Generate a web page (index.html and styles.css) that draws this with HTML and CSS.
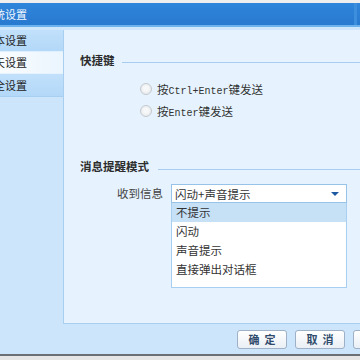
FILE: index.html
```html
<!DOCTYPE html>
<html lang="zh">
<head>
<meta charset="utf-8">
<title>系统设置</title>
<link rel="stylesheet" href="styles.css">
</head>
<body>
<div class="window">
  <div class="topstrip"></div>
  <div class="titlebar"><span class="title">系统设置</span><span class="edge"></span></div>
  <div class="titleline"></div>
  <div class="body">
    <nav class="nav">
      <div class="tab">基本设置</div>
      <div class="tab active">聊天设置</div>
      <div class="tab">安全设置</div>
    </nav>
    <main class="panel">
      <div class="section-head"><span class="label">快捷键</span><span class="rule"></span></div>
      <div class="radios">
        <div class="radio-row"><span class="radio"></span><span class="rtext">按<span class="mono">Ctrl+Enter</span>键发送</span></div>
        <div class="radio-row"><span class="radio"></span><span class="rtext">按<span class="mono">Enter</span>键发送</span></div>
      </div>
      <div class="section-head second"><span class="label">消息提醒模式</span><span class="rule"></span></div>
      <div class="form-row">
        <span class="flabel">收到信息</span>
        <div class="combo">
          <div class="select"><span>闪动+声音提示</span><span class="arrow"></span></div>
          <ul class="list">
            <li class="sel">不提示</li>
            <li>闪动</li>
            <li>声音提示</li>
            <li>直接弹出对话框</li>
          </ul>
        </div>
      </div>
    </main>
  </div>
  <div class="footer">
    <button class="btn">确定</button>
    <button class="btn">取消</button>
    <button class="btn">应用</button>
  </div>
  <div class="bottomline"></div>
</div>
</body>
</html>
```
FILE: styles.css
```css
html, body {
  margin: 0;
  padding: 0;
  width: 360px;
  height: 360px;
  overflow: hidden;
  background: #e6e6e6;
}
body {
  font-family: "Noto Sans CJK SC", "Noto Sans", sans-serif;
  color: #333;
}
.window {
  width: 420px;
  margin-left: -24px;
  display: flex;
  flex-direction: column;
}
.topstrip {
  height: 3px;
  background: #efefef;
}
.titlebar {
  height: 22px;
  background: linear-gradient(#2f86da, #2879d0);
  display: flex;
  align-items: center;
  padding-left: 7px;
  position: relative;
}
.title {
  color: #f2f8fe;
  font-size: 11px;
  line-height: 22px;
  letter-spacing: 0;
}
.edge {
  position: absolute;
  left: 378px;
  top: 0;
  width: 3px;
  height: 22px;
  background: #3d8fdd;
}
.titleline {
  height: 2px;
  background: #6cb3ee;
  border-bottom: 3px solid #cfe6fb;
}
.body {
  display: flex;
  height: 294px;
  background: #cde5fa;
}
.nav {
  width: 88px;
  flex: none;
  display: flex;
  flex-direction: column;
}
.tab {
  height: 21px;
  line-height: 21px;
  font-size: 11px;
  padding-left: 7px;
  color: #222;
  background: linear-gradient(#c1e0fb, #b3d8f8);
  border-bottom: 1px solid #def0fd;
  border-right: 1px solid #9fc8ec;
}
.tab.active {
  background: linear-gradient(90deg, #ffffff, #eaf5fe);
  border-right: 1px solid transparent;
  border-bottom: 1px solid #e6f3fe;
}
.tab:last-child {
  height: 22px;
  line-height: 22px;
  border-bottom: 1px solid #a9cff0;
}
.panel {
  flex: 1;
  background: #e6f3fe;
  border-left: 1px solid #a9cff0;
  border-bottom: 1px solid #a9cff0;
  margin-left: -1px;
  padding-left: 16px;
  display: flex;
  flex-direction: column;
}
.section-head {
  display: flex;
  align-items: center;
  height: 16px;
  margin-top: 22px;
}
.section-head.second {
  margin-top: 36px;
}
.label {
  font-size: 11.5px;
  font-weight: bold;
  color: #2d2d2d;
  line-height: 16px;
}
.rule {
  flex: 1;
  border-top: 1px solid #a6cdef;
  margin-left: 7px;
  margin-top: 4px;
}
.second .rule {
  margin-left: 9px;
  margin-top: 6px;
}
.radios {
  margin-top: 10px;
  padding-left: 60px;
  display: flex;
  flex-direction: column;
}
.radio-row {
  height: 22px;
  display: flex;
  align-items: center;
}
.radio {
  width: 10px;
  height: 10px;
  border-radius: 50%;
  border: 1px solid #c4c9ce;
  background: radial-gradient(circle at 50% 45%, #f6f7f8 30%, #dfe3e7 100%);
  margin-right: 5px;
}
.rtext {
  font-size: 11.5px;
  color: #333;
}
.mono {
  font-family: "Liberation Mono", monospace;
  font-size: 10px;
}
.form-row {
  display: flex;
  align-items: flex-start;
  margin-top: 10px;
}
.flabel {
  width: 83px;
  text-align: right;
  font-size: 11.5px;
  line-height: 19px;
  color: #444;
  margin-right: 8px;
}
.combo {
  width: 176px;
  display: flex;
  flex-direction: column;
}
.select {
  height: 17px;
  border: 1px solid #98c3e8;
  background: #fff;
  display: flex;
  align-items: center;
  justify-content: space-between;
  padding: 0 7px 0 3px;
  font-size: 11.5px;
  color: #333;
}
.arrow {
  width: 0;
  height: 0;
  border-left: 4px solid transparent;
  border-right: 4px solid transparent;
  border-top: 4px solid #1d5aa2;
  margin-top: 1px;
}
.list {
  list-style: none;
  margin: 0;
  padding: 0 0 8px 0;
  background: #fff;
  border: 1px solid #a9cff0;
  border-top: none;
}
.list li {
  height: 19px;
  line-height: 19px;
  padding-left: 4px;
  font-size: 11.5px;
  color: #333;
}
.list li.sel {
  background: #c6e0f6;
}
.footer {
  height: 30px;
  background: #cde5fa;
  display: flex;
  align-items: flex-start;
  padding-top: 6px;
  padding-left: 261px;
  gap: 8px;
  box-sizing: border-box;
}
.btn {
  width: 50px;
  height: 19px;
  padding: 0;
  border: 1px solid #9eb1c6;
  border-radius: 3px;
  background: linear-gradient(#ffffff, #e9eff5);
  font-family: "Noto Sans CJK SC", sans-serif;
  font-size: 11px;
  font-weight: bold;
  color: #2f4a6a;
  letter-spacing: 5px;
  text-indent: 5px;
  line-height: 17px;
  flex: none;
}
.bottomline {
  height: 2px;
  background: #6b6f73;
}
```
